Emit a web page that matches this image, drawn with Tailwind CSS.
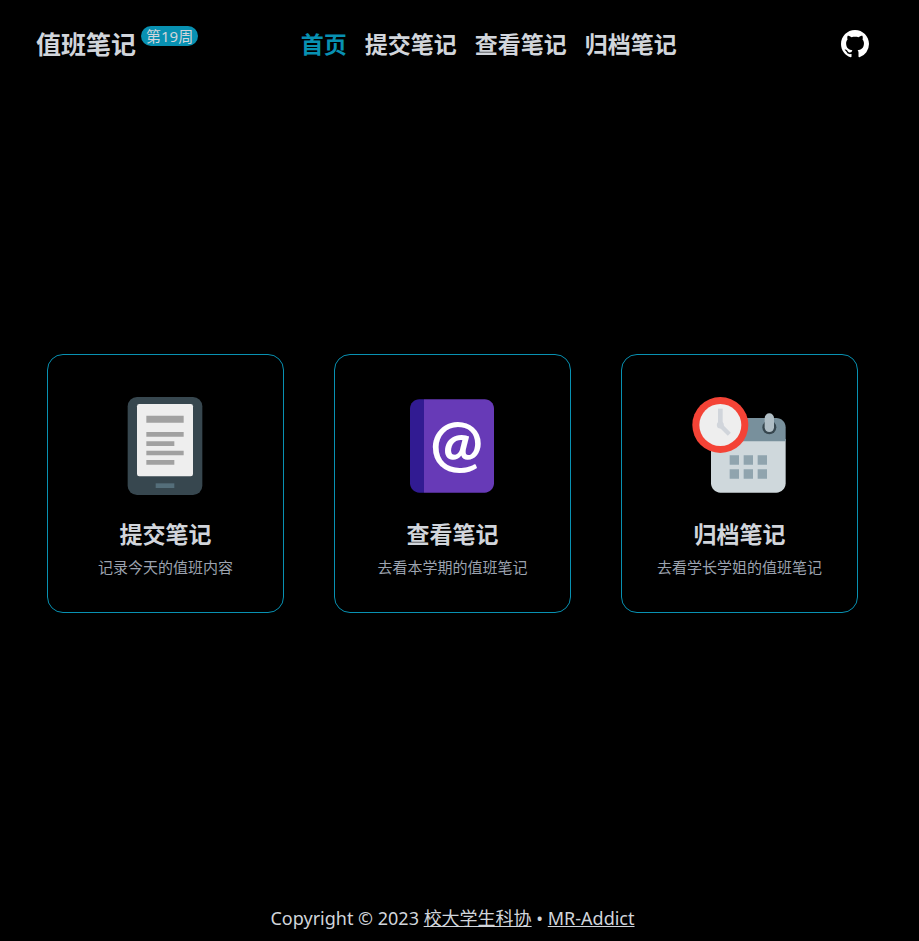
<!DOCTYPE html>
<html lang="zh-CN">
<head>
<meta charset="utf-8">
<meta name="viewport" content="width=device-width, initial-scale=1">
<title>值班笔记</title>
<script src="https://cdn.jsdelivr.net/npm/@tailwindcss/browser@4"></script>
</head>
<body class="flex min-h-screen flex-col bg-black pr-[14px] font-['Noto_Sans','Noto_Sans_CJK_SC',sans-serif] text-[#d1d5db]">
  <header class="flex h-[88px] items-center px-9">
    <div class="flex grow-5 items-center gap-[5px]">
      <a href="#" class="text-[25px] leading-9 font-bold whitespace-nowrap">值班笔记</a>
      <span class="mb-4 rounded-full bg-[#0891b2] px-[5px] text-[15px] leading-5 whitespace-nowrap">第19周</span>
    </div>
    <nav class="flex gap-[18px] text-[23px] leading-9 font-bold whitespace-nowrap">
      <a href="#" class="text-[#0891b2]">首页</a>
      <a href="#">提交笔记</a>
      <a href="#">查看笔记</a>
      <a href="#">归档笔记</a>
    </nav>
    <div class="flex grow-8 justify-end">
      <a href="#" aria-label="GitHub" class="text-white">
        <svg class="size-7" viewBox="0 0 16 16" fill="currentColor"><path d="M8 0C3.580 0 0 3.580 0 8c0 3.540 2.290 6.530 5.470 7.590.400.070.550-.170.550-.380 0-.190-.010-.820-.010-1.490-2.010.370-2.530-.490-2.690-.940-.090-.230-.480-.940-.820-1.130-.280-.150-.680-.520-.010-.530.630-.010 1.080.580 1.230.820.720 1.210 1.870.870 2.330.660.070-.520.280-.870.510-1.070-1.780-.200-3.640-.890-3.640-3.950 0-.870.310-1.590.820-2.150-.080-.200-.360-1.020.080-2.120 0 0 .670-.210 2.200.820.640-.180 1.320-.270 2-.270s1.360.090 2 .270c1.530-1.040 2.200-.820 2.200-.820.440 1.100.160 1.920.080 2.120.510.560.820 1.270.820 2.150 0 3.070-1.870 3.750-3.650 3.950.290.250.540.730.540 1.480 0 1.070-.010 1.930-.010 2.200 0 .210.150.460.550.380A8.010 8.010 0 0 0 16 8c0-4.420-3.580-8-8-8z"/></svg>
      </a>
    </div>
  </header>

  <main class="flex grow flex-col justify-center px-[47px]">
    <div class="grid grid-cols-3 gap-[50px] text-center">
      <a href="#" class="flex flex-col items-center rounded-2xl border border-[#0891b2] py-[35px]">
        <svg class="h-28 w-[113px]" viewBox="0 0 48 48" preserveAspectRatio="xMinYMid">
          <rect x="8" y="3" width="32" height="42" rx="4" fill="#37474F"/>
          <rect x="12" y="6" width="24" height="31" rx="1" fill="#EEE"/>
          <path fill="#A1A1A1" d="M16 11h16v3H16zM16 18h16v2H16zM16 22h12v2H16zM16 26h16v2H16zM16 30h12v2H16z"/>
          <path fill="#546E7A" d="M20 40h8v2h-8z"/>
        </svg>
        <h2 class="mt-[15px] text-[23px] leading-[35px] font-bold">提交笔记</h2>
        <p class="mt-[5px] text-[15px] leading-5 text-[#9ca3af]">记录今天的值班内容</p>
      </a>
      <a href="#" class="flex flex-col items-center rounded-2xl border border-[#0891b2] py-[35px]">
        <svg class="h-28 w-[113px]" viewBox="0 0 48 48" preserveAspectRatio="xMinYMid">
          <path fill="#673AB7" d="M38 44H12V4h26c2.200 0 4 1.800 4 4v32c0 2.200-1.800 4-4 4z"/>
          <path fill="#311B92" d="M10 4h2v40h-2c-2.200 0-4-1.800-4-4V8c0-2.200 1.800-4 4-4z"/>
          <text x="26" y="32" text-anchor="middle" font-family="Lato" font-weight="700" font-size="27" fill="#fff">@</text>
        </svg>
        <h2 class="mt-[15px] text-[23px] leading-[35px] font-bold">查看笔记</h2>
        <p class="mt-[5px] text-[15px] leading-5 text-[#9ca3af]">去看本学期的值班笔记</p>
      </a>
      <a href="#" class="flex flex-col items-center rounded-2xl border border-[#0891b2] py-[35px]">
        <svg class="h-28 w-[113px]" viewBox="0 0 48 48" preserveAspectRatio="xMinYMid">
          <path fill="#CFD8DC" d="M12 40V21h32v19c0 2.200-1.800 4-4 4H16c-2.200 0-4-1.800-4-4z"/>
          <path fill="#78909C" d="M44 16v6H12v-6c0-2.200 1.800-4 4-4h24c2.200 0 4 1.800 4 4z"/>
          <circle cx="37" cy="16" r="3" fill="#37474F"/>
          <rect x="35" y="10" width="4" height="8" rx="2" fill="#B0BEC5"/>
          <path fill="#90A4AE" d="M20 28h4v4h-4zM26 28h4v4h-4zM32 28h4v4h-4zM20 34h4v4h-4zM26 34h4v4h-4zM32 34h4v4h-4z"/>
          <circle cx="16" cy="15" r="12" fill="#F44336"/>
          <circle cx="16" cy="15" r="9" fill="#EEE"/>
          <path fill="currentColor" d="M15 8h2v7h-2z"/>
          <path fill="currentColor" d="M20.500 18.300l-1.300 1.300-3.900-3.900 1.300-1.300z"/>
          <circle cx="16" cy="15" r="1.500" fill="currentColor"/>
        </svg>
        <h2 class="mt-[15px] text-[23px] leading-[35px] font-bold">归档笔记</h2>
        <p class="mt-[5px] text-[15px] leading-5 text-[#9ca3af]">去看学长学姐的值班笔记</p>
      </a>
    </div>
  </main>

  <footer class="pt-[26px] pb-[10px] text-center text-[18px] leading-[26px]">
    Copyright © 2023 <a href="#" class="underline">校大学生科协</a> • <a href="#" class="underline">MR-Addict</a>
  </footer>
</body>
</html>
